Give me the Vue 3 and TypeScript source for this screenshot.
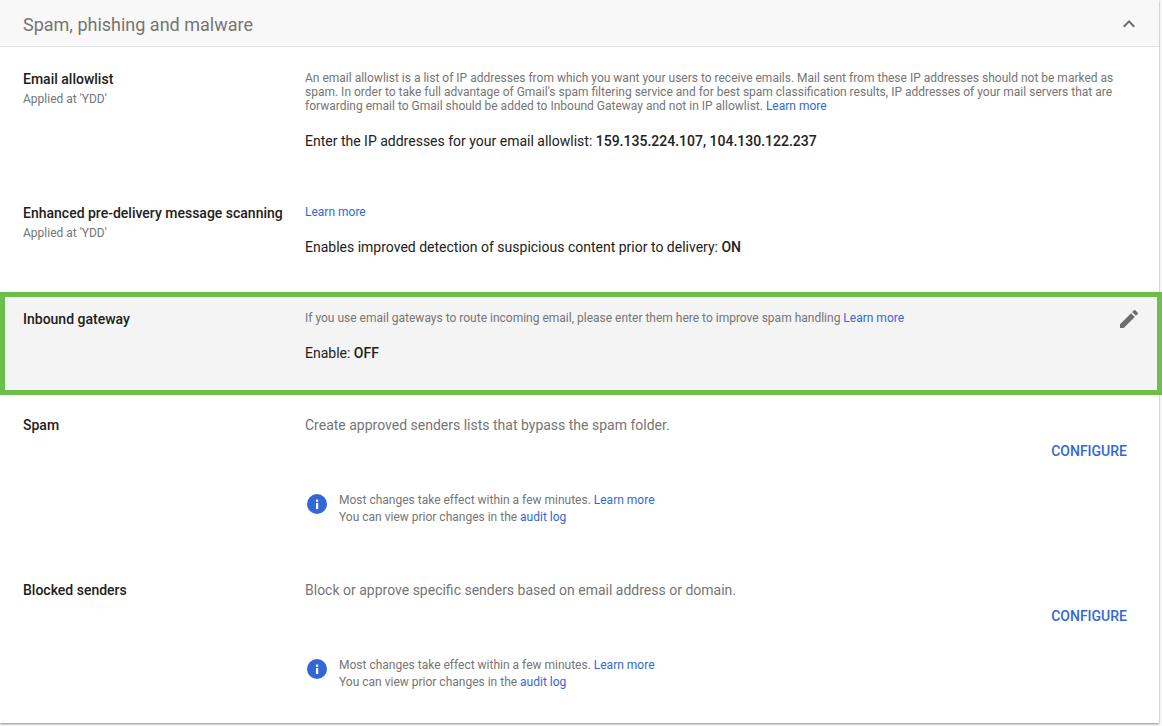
<script setup lang="ts">
const notes = [
  { title: 'Spam', desc: 'Create approved senders lists that bypass the spam folder.' },
  { title: 'Blocked senders', desc: 'Block or approve specific senders based on email address or domain.' },
]
</script>

<template>
  <div class="page">
    <section class="card">
      <header class="head">
        <h2>Spam, phishing and malware</h2>
        <svg class="chev" width="24" height="24" viewBox="0 0 24 24"><path d="M7.41 15.41 12 10.83l4.59 4.58L18 14l-6-6-6 6z" fill="#6b6b6b" /></svg>
      </header>

      <div class="row r1">
        <div class="label"><div class="name">Email allowlist</div><div class="sub">Applied at 'YDD'</div></div>
        <div class="body">
          <p class="small">An email allowlist is a list of IP addresses from which you want your users to receive emails. Mail sent from these IP addresses should not be marked as spam. In order to take full advantage of Gmail's spam filtering service and for best spam classification results, IP addresses of your mail servers that are forwarding email to Gmail should be added to Inbound Gateway and not in IP allowlist. <a>Learn more</a></p>
          <p class="val v1">Enter the IP addresses for your email allowlist: <b>159.135.224.107, 104.130.122.237</b></p>
        </div>
      </div>

      <div class="row r2">
        <div class="label"><div class="name">Enhanced pre-delivery message scanning</div><div class="sub">Applied at 'YDD'</div></div>
        <div class="body">
          <p class="small"><a>Learn more</a></p>
          <p class="val v1">Enables improved detection of suspicious content prior to delivery: <b>ON</b></p>
        </div>
      </div>

      <div class="row r3">
        <div class="label"><div class="name">Inbound gateway</div></div>
        <div class="body">
          <p class="small">If you use email gateways to route incoming email, please enter them here to improve spam handling <a>Learn more</a></p>
          <p class="val v1">Enable: <b>OFF</b></p>
        </div>
        <svg class="pencil" width="24" height="24" viewBox="0 0 24 24"><path d="M3 17.25V21h3.75L17.81 9.94l-3.75-3.75L3 17.25zM20.71 7.04a1 1 0 0 0 0-1.41l-2.34-2.34a1 1 0 0 0-1.41 0l-1.83 1.83 3.75 3.75 1.83-1.83z" fill="#6e6e6e" /></svg>
      </div>

      <div v-for="n in notes" :key="n.title" class="row r4">
        <div class="label"><div class="name">{{ n.title }}</div></div>
        <div class="body">
          <p class="desc">{{ n.desc }}</p>
          <div class="action"><a class="cfg">CONFIGURE</a></div>
          <div class="note">
            <svg width="22" height="22" viewBox="0 0 22 22"><circle cx="11" cy="11" r="10" fill="#3367d6" /><rect x="10" y="10" width="2.2" height="6" fill="#fff" /><rect x="10" y="6.6" width="2.2" height="2.2" fill="#fff" /></svg>
            <p class="small">Most changes take effect within a few minutes. <a>Learn more</a><br />You can view prior changes in the <a>audit log</a></p>
          </div>
        </div>
      </div>
    </section>
  </div>
</template>

<style scoped>
.page {
  width: 1162px;
  height: 726px;
  overflow: hidden;
  background: #fafafa;
  font-family: Roboto, "Liberation Sans", sans-serif;
  color: #212121;
}
.card {
  width: 1159px;
  height: 723px;
  background: #fff;
  box-shadow: 0 1px 2px rgba(0, 0, 0, 0.45);
}
.head {
  height: 46px;
  display: flex;
  align-items: center;
  justify-content: space-between;
  padding: 0 18px 0 23px;
  background: #f8f8f8;
  border-bottom: 1px solid #e0e0e0;
  box-sizing: content-box;
}
h2 {
  margin: 2px 0 0;
  font-size: 18px;
  font-weight: 400;
  color: #757575;
}
.chev { margin-top: 1px; }
.row {
  display: flex;
  box-sizing: border-box;
  padding: 22px 0 0 23px;
}
.r1 { height: 134px; }
.r2 { height: 111px; }
.r3 {
  position: relative;
  width: 1162px;
  height: 103px;
  padding: 17px 0 0 23px;
  background: #f4f4f4;
  box-shadow: inset 0 0 0 5px #6cbf4b;
}
.r4 { height: 165px; padding-top: 20px; }
.r4:last-child { height: 163px; }
.label { width: 282px; flex: none; }
.name {
  font-size: 14px;
  line-height: 20px;
  font-weight: 500;
}
.sub {
  font-size: 12px;
  line-height: 16px;
  margin-top: 2px;
  color: #757575;
}
.body { width: 822px; flex: none; }
p { margin: 0; }
.small {
  font-size: 12px;
  line-height: 14px;
  color: #757575;
}
.r1 .small,
.r2 .small,
.r3 .small { margin-top: 2px; }
a { color: #3367d6; }
.val {
  font-size: 14px;
  line-height: 18px;
  color: #212121;
}
.val b { font-weight: 500; }
.v1 { margin-top: 19px; }
.pencil {
  position: absolute;
  top: 15px;
  right: 21px;
}
.desc {
  font-size: 14px;
  line-height: 20px;
  color: #757575;
}
.action {
  display: flex;
  justify-content: flex-end;
  margin-top: 6px;
}
.cfg {
  font-size: 14px;
  line-height: 20px;
  font-weight: 500;
}
.note {
  display: flex;
  align-items: flex-start;
  gap: 11px;
  margin-top: 31px;
  margin-left: 1px;
}
.note svg { margin-top: 1px; }
.note .small { line-height: 17px; }
</style>

<style>
html, body { background: #fafafa; }
</style>
